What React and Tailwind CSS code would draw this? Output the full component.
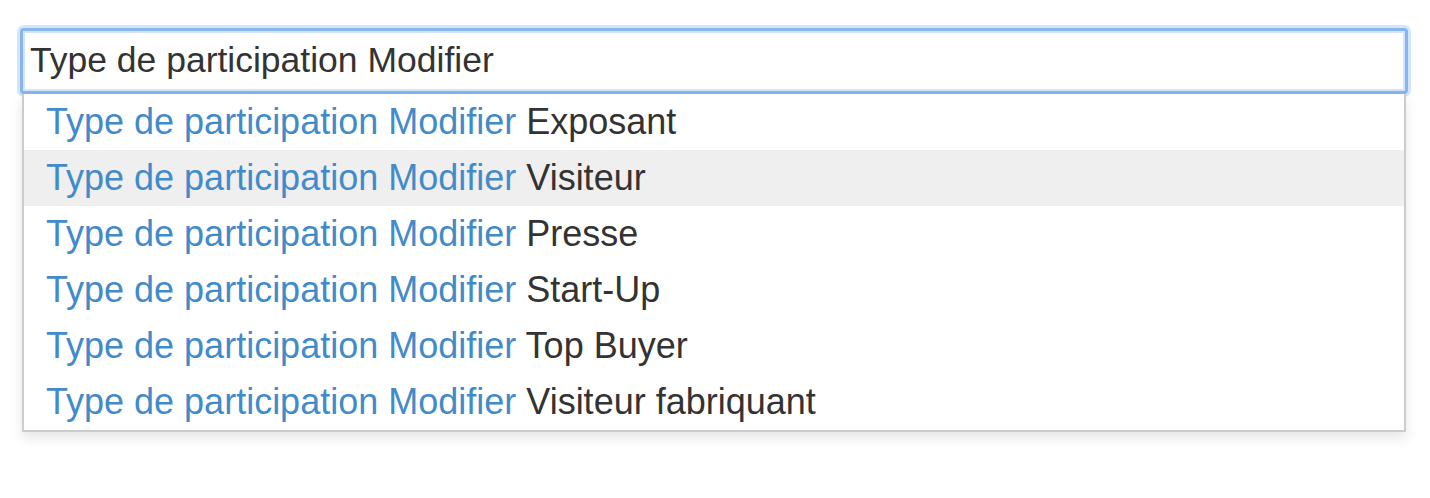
const options = ['Exposant', 'Visiteur', 'Presse', 'Start-Up', 'Top Buyer', 'Visiteur fabriquant'];

export default function App() {
  const prefix = 'Type de participation Modifier';
  return (
    <div className="w-[1430px] h-[498px] bg-white pt-[28px] pl-[20px] font-['Liberation_Sans',Arial,sans-serif]">
      <div className="w-[1388px]">
        <div className="h-[66px] rounded-[4px] border-[3px] border-[#86b5f0] shadow-[0_0_0_3px_#d3e4fb,inset_0_0_0_2px_#d3e4fb] bg-white flex items-center pl-[7px] pb-[1px]">
          <span className="text-[35.5px] text-[#333] leading-none">{prefix}</span>
        </div>
        <div className="ml-[2px] w-[1384px] border-x-[2px] border-b-[2px] border-[#cccccc] bg-white shadow-[0_6px_12px_rgba(0,0,0,0.1)]">
          {options.map((o, i) => (
            <div
              key={o}
              className={`h-[56px] flex items-center pl-[22px] text-[36px] leading-none whitespace-pre ${i === 1 ? 'bg-[#efefef]' : ''}`}
            >
              <span className="text-[#428bca]">{prefix}</span>
              <span className="text-[#333]"> {o}</span>
            </div>
          ))}
        </div>
      </div>
    </div>
  );
}
